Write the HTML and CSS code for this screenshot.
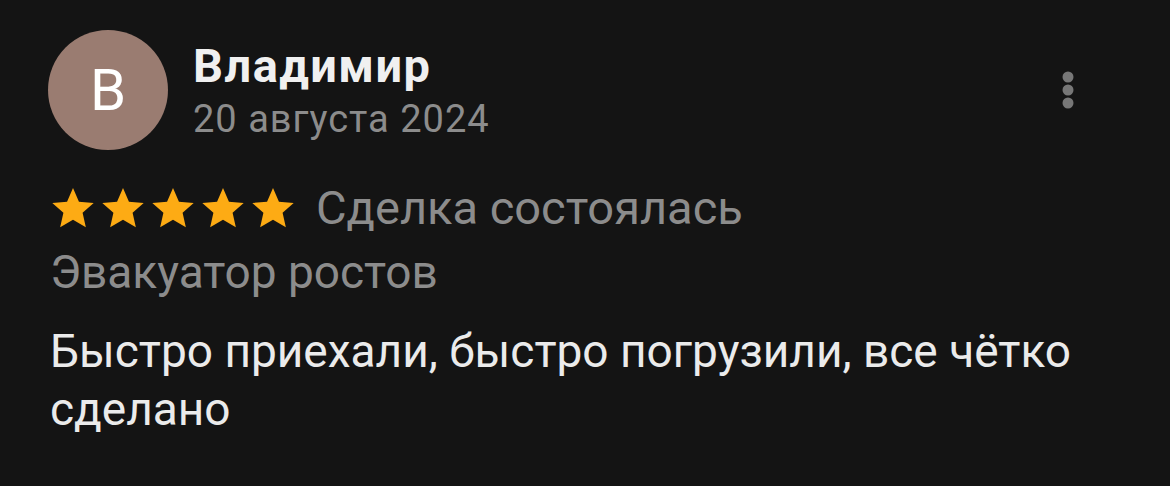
FILE: index.html
```html
<html>
	<head>
		<title>Отзыв</title>
		<link rel="stylesheet" href="styles.css">
	</head>
	<body>
		<div class="review">
			<div class="review-head">
				<div class="avatar">В</div>
				<div class="author">
					<div class="author-name">Владимир</div>
					<div class="author-date">20 августа 2024</div>
				</div>
				<button class="more" aria-label="Ещё">
					<svg width="14" height="42" viewBox="0 0 14 42">
						<circle cx="7" cy="8" r="5.5" fill="#777"/>
						<circle cx="7" cy="21" r="5.5" fill="#777"/>
						<circle cx="7" cy="34" r="5.5" fill="#777"/>
					</svg>
				</button>
			</div>
			<div class="rating">
				<div class="stars">
					<svg class="star" viewBox="0 0 24 24"><path d="M12 1.6l3.1 7.1 7.7.7-5.8 5.1 1.7 7.6L12 18.1l-6.7 4 1.7-7.6-5.8-5.1 7.7-.7z"/></svg>
					<svg class="star" viewBox="0 0 24 24"><path d="M12 1.6l3.1 7.1 7.7.7-5.8 5.1 1.7 7.6L12 18.1l-6.7 4 1.7-7.6-5.8-5.1 7.7-.7z"/></svg>
					<svg class="star" viewBox="0 0 24 24"><path d="M12 1.6l3.1 7.1 7.7.7-5.8 5.1 1.7 7.6L12 18.1l-6.7 4 1.7-7.6-5.8-5.1 7.7-.7z"/></svg>
					<svg class="star" viewBox="0 0 24 24"><path d="M12 1.6l3.1 7.1 7.7.7-5.8 5.1 1.7 7.6L12 18.1l-6.7 4 1.7-7.6-5.8-5.1 7.7-.7z"/></svg>
					<svg class="star" viewBox="0 0 24 24"><path d="M12 1.6l3.1 7.1 7.7.7-5.8 5.1 1.7 7.6L12 18.1l-6.7 4 1.7-7.6-5.8-5.1 7.7-.7z"/></svg>
				</div>
				<span class="deal">Сделка состоялась</span>
			</div>
			<div class="service">Эвакуатор ростов</div>
			<p class="text">Быстро приехали, быстро погрузили, все чётко сделано</p>
		</div>
	</body>
</html>
```

FILE: styles.css
```css
body {
	background: #141414;
	margin: 0;
	font-family: Roboto, "Liberation Sans", sans-serif;
	color: #e8e8e8;
}
.review {
	padding: 30px 0 0 48px;
	width: 1032px;
}
.review-head {
	display: flex;
	align-items: center;
}
.avatar {
	width: 120px;
	height: 120px;
	border-radius: 50%;
	background: #9a7c71;
	color: #fff;
	font-size: 58px;
	display: flex;
	align-items: center;
	justify-content: center;
	flex-shrink: 0;
}
.author {
	margin-left: 25px;
	flex: 1;
	margin-top: 6px;
}
.author-name {
	font-weight: 700;
	font-size: 47px;
	line-height: 52px;
	letter-spacing: 1.5px;
	color: #f0f0f0;
}
.author-date {
	font-size: 38px;
	line-height: 54px;
	letter-spacing: 1px;
	color: #8c8c8c;
}
.more {
	background: none;
	border: 0;
	padding: 0;
	margin-right: 5px;
	align-self: flex-start;
	margin-top: 39px;
}
.rating {
	display: flex;
	align-items: center;
	height: 50px;
	margin-top: 33px;
	margin-left: 2px;
}
.stars {
	display: flex;
	gap: 4px;
}
.star {
	width: 46px;
	height: 46px;
	fill: #fdab14;
}
.deal {
	margin-left: 20px;
	font-size: 47px;
	line-height: 50px;
	color: #8c8c8c;
}
.service {
	margin-top: 13px;
	margin-left: 2px;
	font-size: 46px;
	line-height: 52px;
	color: #8c8c8c;
}
.text {
	margin: 24px 0 0 2px;
	font-size: 46px;
	line-height: 58px;
	color: #ebebeb;
}
```
